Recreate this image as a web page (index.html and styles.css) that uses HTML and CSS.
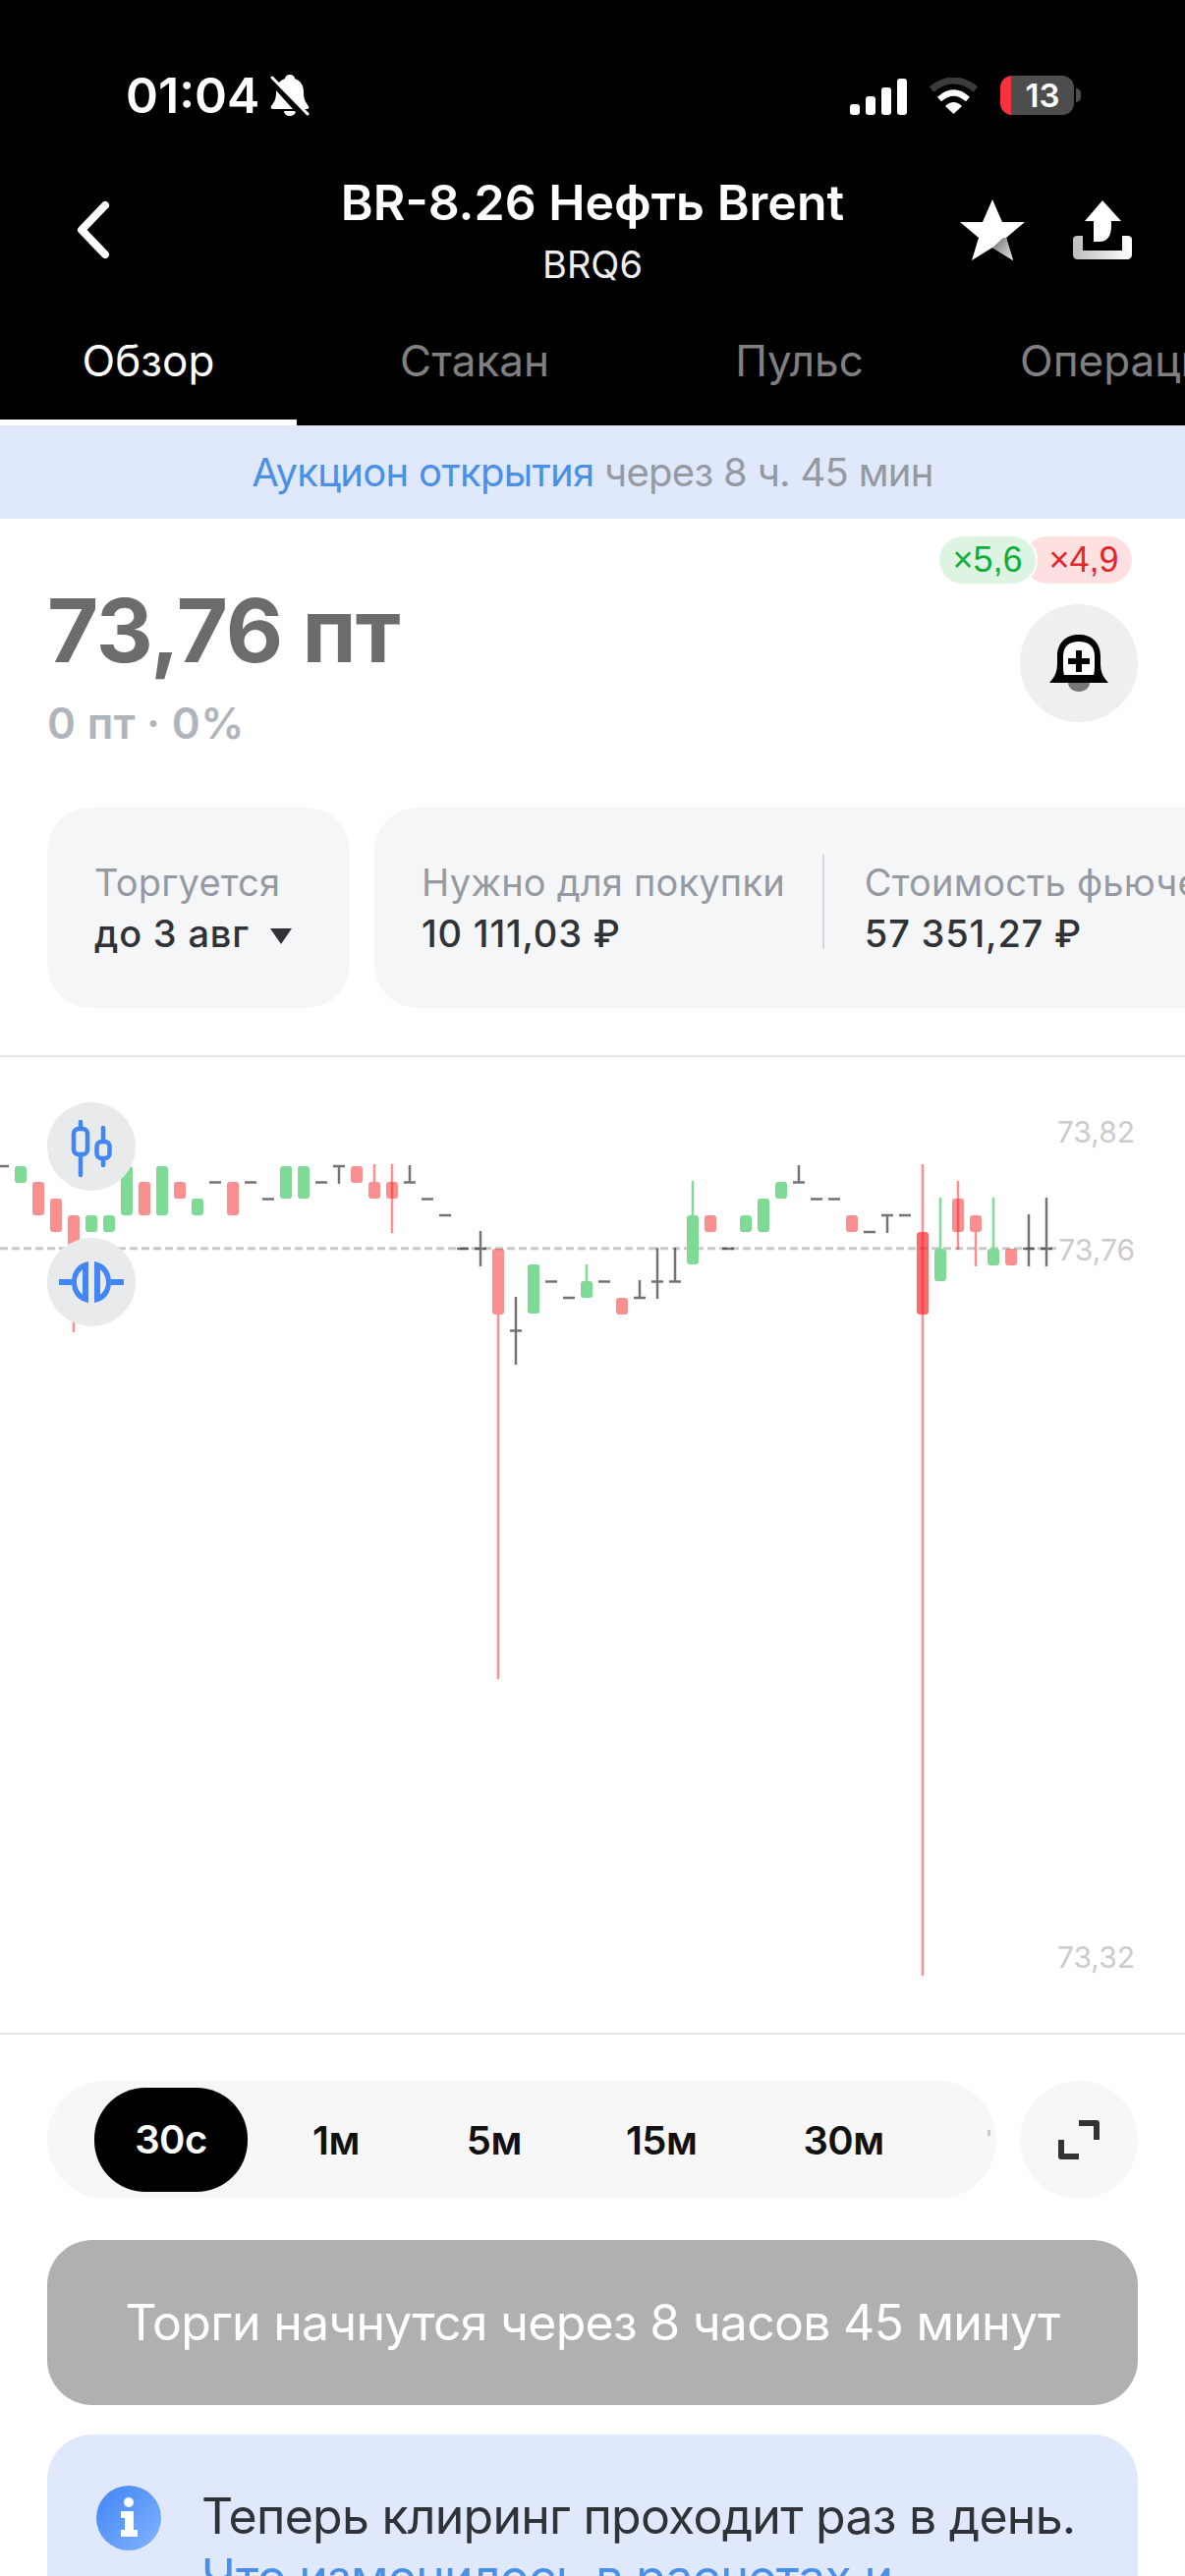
FILE: index.html
```html
<!DOCTYPE html>
<html lang="ru">
<head>
    <meta charset="utf-8">
    <title> BR-8.26 Нефть Brent </title>
    <link rel="stylesheet" href="styles.css">
</head>
<body>
    <!-- Header -->
    <header class="top">
        <div class="status">
            <div class="status-left">
                <span class="clock">01:04</span>
                <svg class="muted" viewBox="0 0 40 42">
                    <path fill="#fff" d="M20 0c3 0 5 2 5 4 6 2 9 7 9 14 0 7 2 10 5 14 1 2 0 3-2 3H3c-2 0-3-1-2-3 3-4 5-7 5-14 0-7 3-12 9-14 0-2 2-4 5-4zM14 37h12c0 3-3 5-6 5s-6-2-6-5z"/>
                    <path stroke="#000" stroke-width="7" d="M-3 1 L36 44"/>
                    <path stroke="#fff" stroke-width="3" stroke-linecap="round" d="M2 3 L38 40"/>
                </svg>
            </div>
            <div class="status-right">
                <div class="signal"><i class="b1"></i><i class="b2"></i><i class="b3"></i><i class="b4"></i></div>
                <svg class="wifi" viewBox="0 0 51 37" fill="none">
                    <path stroke="#3b3b3b" stroke-width="7" d="M3 12 Q25.5 -6 48 12"/>
                    <path stroke="#fff" stroke-width="6" d="M11 22 Q25.5 9 40 22"/>
                    <path fill="#fff" d="M17 29 Q25.5 21 34 29 L25.5 37 Z"/>
                </svg>
                <div class="battery">13</div>
            </div>
        </div>

        <div class="nav">
            <svg class="back" viewBox="0 0 34 60" fill="none">
                <path stroke="#fff" stroke-width="8" stroke-linecap="round" stroke-linejoin="round" d="M29 5 L5 30 L29 55"/>
            </svg>
            <div class="title">
                <div class="name">BR-8.26 Нефть Brent</div>
                <div class="ticker">BRQ6</div>
            </div>
            <div class="actions">
                <svg class="star" viewBox="0 0 66 63">
                    <defs>
                        <linearGradient id="starfade" x1="0" y1="0" x2="1" y2="1">
                            <stop offset="0" stop-color="#6f6f6f"/>
                            <stop offset="1" stop-color="#e8e8e8"/>
                        </linearGradient>
                        <linearGradient id="trayfade" x1="0" y1="0" x2="1" y2="0">
                            <stop offset="0" stop-color="#bdbdbd"/>
                            <stop offset="1" stop-color="#ffffff"/>
                        </linearGradient>
                    </defs>
                    <path fill="#fff" d="M33 0 L43 23 L66 23 L47 39 L54 62 L33 49 L12 62 L19 39 L0 23 L23 23 Z"/>
                    <path fill="url(#starfade)" d="M33 49 L44 39 L47 39 L54 62 Z"/>
                </svg>
                <svg class="share" viewBox="0 0 60 60">
                    <path fill="#fff" d="M30 0 L49 21 H39 V26 C39 36 35 42 27 42 H21 V21 H12 Z"/>
                    <path fill="url(#trayfade)" d="M0 40 C0 37 2 36 5 36 H10 V51 H50 V36 H55 C58 36 60 37 60 40 V55 C60 58 58 60 55 60 H5 C2 60 0 58 0 55 Z"/>
                </svg>
            </div>
        </div>

        <nav class="tabs">
            <a class="tab tab-active">Обзор</a>
            <a class="tab tab-stakan">Стакан</a>
            <a class="tab tab-puls">Пульс</a>
            <a class="tab tab-ops">Операции</a>
        </nav>
    </header>

    <div class="auction"><span class="link">Аукцион открытия</span> через 8 ч. 45 мин</div>

    <!-- Price -->
    <section class="price-block">
        <div class="price-row">
            <div class="price-left">
                <div class="price">73,76 пт</div>
                <div class="change">0 пт · 0%</div>
            </div>
            <div class="price-right">
                <div class="badges">
                    <span class="badge badge-long">×5,6</span>
                    <span class="badge badge-short">×4,9</span>
                </div>
                <div class="round-btn">
                    <svg class="bell" viewBox="0 0 60 58">
                        <path fill="#000" d="M0 49 C6 42 8 38 8 28 V22 C8 8 17 0 30 0 C43 0 52 8 52 22 V28 C52 38 54 42 60 49 Z"/>
                        <path fill="#fff" d="M15 41 C14 38 14 34 14 28 V22 C14 12 20 7 30 7 C40 7 46 12 46 22 V28 C46 34 46 38 45 41 Z"/>
                        <path stroke="#000" stroke-width="6" d="M19 27 H41 M30 16 V38"/>
                        <path fill="#777" d="M19 49 H41 C41 54 36 58 30 58 C24 58 19 54 19 49 Z"/>
                    </svg>
                </div>
            </div>
        </div>

        <div class="cards">
            <div class="card card-expiry">
                <div class="card-label">Торгуется</div>
                <div class="card-value">до 3 авг <i class="caret"></i></div>
            </div>
            <div class="card card-money">
                <div class="card-cell">
                    <div class="card-label">Нужно для покупки</div>
                    <div class="card-value">10 111,03 ₽</div>
                </div>
                <div class="card-line"></div>
                <div class="card-cell">
                    <div class="card-label">Стоимость фьючерса</div>
                    <div class="card-value">57 351,27 ₽</div>
                </div>
            </div>
        </div>
    </section>

    <!-- Chart -->
    <section class="chart">
        <svg class="plot" viewBox="0 1076 1206 993">
            <path class="last" d="M0 1270.7 H1075"/>

            <g class="up">
                <rect x="15" y="1187" width="12" height="17" rx="3"/>
                <rect x="87" y="1237" width="12" height="17" rx="3"/>
                <rect x="105" y="1237" width="12" height="17" rx="3"/>
                <rect x="123" y="1187" width="12" height="50" rx="3"/>
                <rect x="159" y="1187" width="12" height="50" rx="3"/>
                <rect x="195" y="1220" width="12" height="17" rx="3"/>
                <rect x="285" y="1187" width="12" height="33" rx="3"/>
                <rect x="303" y="1187" width="12" height="33" rx="3"/>
                <rect x="537" y="1287" width="12" height="50" rx="3"/>
                <rect x="591" y="1304" width="12" height="17" rx="3"/>
                <rect x="595.75" y="1287" width="2.5" height="17"/>
                <rect x="699" y="1237" width="12" height="50" rx="3"/>
                <rect x="703.75" y="1202" width="2.5" height="35"/>
                <rect x="753" y="1237" width="12" height="17" rx="3"/>
                <rect x="771" y="1220" width="12" height="34" rx="3"/>
                <rect x="789" y="1203" width="12" height="17" rx="3"/>
                <rect x="951" y="1271" width="12" height="33" rx="3"/>
                <rect x="955.75" y="1219" width="2.5" height="52"/>
                <rect x="1005" y="1271" width="12" height="17" rx="3"/>
                <rect x="1009.75" y="1219" width="2.5" height="52"/>
            </g>

            <g class="down">
                <rect x="33" y="1203" width="12" height="34" rx="3"/>
                <rect x="51" y="1220" width="12" height="34" rx="3"/>
                <rect x="69" y="1237" width="12" height="34" rx="3"/>
                <rect x="73.75" y="1271" width="2.5" height="85"/>
                <rect x="141" y="1203" width="12" height="34" rx="3"/>
                <rect x="177" y="1203" width="12" height="17" rx="3"/>
                <rect x="231" y="1203" width="12" height="34" rx="3"/>
                <rect x="357" y="1187" width="12" height="17" rx="3"/>
                <rect x="375" y="1203" width="12" height="17" rx="3"/>
                <rect x="379.75" y="1185" width="2.5" height="18"/>
                <rect x="393" y="1203" width="12" height="17" rx="3"/>
                <rect x="397.75" y="1185" width="2.5" height="70"/>
                <rect x="501" y="1271" width="12" height="67" rx="3"/>
                <rect x="505.75" y="1338" width="2.5" height="371"/>
                <rect x="627" y="1321" width="12" height="17" rx="3"/>
                <rect x="717" y="1237" width="12" height="17" rx="3"/>
                <rect x="861" y="1237" width="12" height="17" rx="3"/>
                <rect class="down-deep" x="933" y="1254" width="12" height="84" rx="3"/>
                <rect x="937.75" y="1185" width="2.5" height="826"/>
                <rect x="969" y="1220" width="12" height="34" rx="3"/>
                <rect x="973.75" y="1202" width="2.5" height="70"/>
                <rect x="987" y="1237" width="12" height="17" rx="3"/>
                <rect x="991.75" y="1254" width="2.5" height="35"/>
                <rect x="1023" y="1271" width="12" height="17" rx="3"/>
            </g>

            <!-- flat candles: open = close -->
            <g class="flat">
                <path d="M-3 1187 H9 M213 1203.5 H225 M249 1203.5 H261 M267 1220.5 H279 M321 1203.5 H333"/>
                <path d="M339 1187 H351 M345 1187 V1205 M411 1203.5 H423 M417 1186 V1203"/>
                <path d="M429 1220.5 H441 M447 1237 H459 M465 1271 H477 M483 1271 H495 M489 1253 V1289"/>
                <path d="M519 1354.5 H531 M525 1320 V1389 M555 1304.5 H567 M573 1321 H585 M609 1304.5 H621"/>
                <path d="M645 1321 H657 M651 1303 V1321 M663 1304.5 H675 M669 1270 V1322 M681 1304.5 H693 M687 1270 V1304"/>
                <path d="M735 1271 H747 M807 1203.5 H819 M813 1186 V1203 M825 1220.5 H837 M843 1220.5 H855"/>
                <path d="M879 1254 H891 M897 1237 H909 M903 1237 V1255 M915 1237 H927"/>
                <path d="M1041 1271 H1053 M1047 1236 V1289 M1059 1271 H1071 M1065 1219 V1289"/>
            </g>

            <text class="axis" x="1155" y="1163" text-anchor="end">73,82</text>
            <text class="axis" x="1155" y="1283" text-anchor="end">73,76</text>
            <text class="axis" x="1155" y="2003" text-anchor="end">73,32</text>
        </svg>

        <div class="chart-btn chart-btn-type">
            <svg viewBox="0 0 90 90" fill="none" stroke="#4285f4" stroke-width="4.5" stroke-linecap="round">
                <path d="M34 20 V27 M34 53 V74"/>
                <rect x="27" y="27" width="14" height="26" rx="5"/>
                <path d="M57 26 V40 M57 57 V64"/>
                <rect x="50.5" y="40" width="13" height="17" rx="5"/>
            </svg>
        </div>
        <div class="chart-btn chart-btn-split">
            <svg viewBox="0 0 90 90" fill="#4285f4" fill-rule="evenodd">
                <path d="M12 42 H25 V48 H12 Z M65 42 H78 V48 H65 Z"/>
                <path d="M42 24 C31 26 25 34 25 45 C25 56 31 64 42 66 Z M36 32 C33 35 30 39 30 45 C30 51 33 55 36 58 Z"/>
                <path d="M48 24 C59 26 65 34 65 45 C65 56 59 64 48 66 Z M54 32 C57 35 60 39 60 45 C60 51 57 55 54 58 Z"/>
            </svg>
        </div>
    </section>

    <!-- Timeframes -->
    <div class="frames">
        <div class="frames-bar">
            <span class="frame frame-active">30с</span>
            <span class="frame f1">1м</span>
            <span class="frame f5">5м</span>
            <span class="frame f15">15м</span>
            <span class="frame f30">30м</span>
            <i class="frame-more"></i>
        </div>
        <div class="round-btn round-btn-light">
            <svg class="expand" viewBox="0 0 42 40" fill="none">
                <path stroke="#333" stroke-width="6" stroke-linejoin="round" d="M21 3 H39 V20"/>
                <path stroke="#333" stroke-width="6" stroke-linejoin="round" d="M3 20 V37 H21"/>
            </svg>
        </div>
    </div>

    <button class="trade-btn" type="button">Торги начнутся через 8 часов 45 минут</button>

    <div class="notice">
        <svg class="info" viewBox="0 0 66 66">
            <defs>
                <linearGradient id="infofill" x1="0" y1="0" x2="1" y2="1">
                    <stop offset="0" stop-color="#3f84f4"/>
                    <stop offset="1" stop-color="#84b4ff"/>
                </linearGradient>
            </defs>
            <circle cx="33" cy="33" r="33" fill="url(#infofill)"/>
            <circle cx="33" cy="17" r="5" fill="#fff"/>
            <path fill="#fff" d="M25 26 H38 V45 H42 V52 H25 V45 H29 V33 H25 Z"/>
        </svg>
        <div class="notice-text">
            <div>Теперь клиринг проходит раз в день.</div>
            <div class="link">Что изменилось в расчетах и</div>
        </div>
    </div>
</body>
</html>
```

FILE: styles.css
```css
* {
    box-sizing: border-box;
}

:root {
    --blue:      #4a8fe8;
    --ink:       #2f3237;
    --label:     #959aa2;
    --card:      #f5f6f8;
    --line:      #e6e6e8;
    --pale-blue: #dfe9fb;
}

html, body {
    margin: 0;
    padding: 0;
}

body {
    width: 1206px;
    height: 2622px;
    overflow: hidden;

    color: var( --ink );
    background-color: #fff;
    font-family: "Inter", "Noto Sans", sans-serif;
}

.link {
    color: var( --blue );
}

/* header */
.top {
    height: 433px;
    padding-top: 77px;

    color: #fff;
    background-color: #000;
}

.status {
    display: flex;
    justify-content: space-between;
    align-items: center;

    height: 40px;
    padding-left: 128px;
    padding-right: 113px;
}

.status-left, .status-right {
    display: flex;
    align-items: center;
}

.clock {
    font-size: 50px;
    font-weight: 600;
}

.muted {
    width: 40px;
    height: 42px;
    margin-left: 11px;
}

.signal {
    display: flex;
    align-items: flex-end;
    gap: 6px;
    height: 37px;
    margin-top: 2px;
}

.signal i {
    width: 10px;
    border-radius: 3px;
    background-color: #fff;
}

.b1 { height: 11px; }
.b2 { height: 19px; }
.b3 { height: 28px; }
.b4 { height: 37px; }

.wifi {
    width: 51px;
    height: 37px;
    margin-left: 22px;
    margin-right: 22px;
}

.battery {
    position: relative;
    width: 75px;
    height: 40px;
    padding-left: 11px;

    border-radius: 12px;
    background: linear-gradient( 90deg, #f5333f 11px, #4d4d4d 11px );

    font-size: 33px;
    font-weight: 600;
    line-height: 40px;
    text-align: center;
}

.battery::after {
    content: "";
    position: absolute;
    right: -7px;
    top: 13px;
    width: 5px;
    height: 14px;
    border-radius: 0 5px 5px 0;
    background-color: #4d4d4d;
}

.nav {
    display: grid;
    grid-template-columns: 1fr auto 1fr;
    align-items: center;

    height: 120px;
    margin-top: 59px;
    padding-left: 78px;
    padding-right: 78px;
}

.back {
    width: 34px;
    height: 60px;
    margin-bottom: 5px;
}

.title {
    align-self: start;
    text-align: center;
}

.name {
    font-size: 50px;
    font-weight: 600;
    line-height: 60px;
}

.ticker {
    margin-top: 11px;
    font-size: 38px;
    line-height: 44px;
    color: #eee;
}

.actions {
    display: flex;
    justify-content: flex-end;
    align-items: center;
    gap: 49px;
    margin-right: -24px;
    margin-bottom: 4px;
}

.star {
    width: 66px;
    height: 63px;
}

.share {
    width: 60px;
    height: 60px;
}

.tabs {
    display: flex;
    height: 91px;
    margin-top: 46px;

    font-size: 44px;
    line-height: 50px;
    color: #808080;
    white-space: nowrap;
}

.tab {
    display: block;
    flex: none;
    text-align: center;
}

.tab-active {
    width: 302px;
    color: #fff;
    border-bottom: 6px solid #fff;
}

.tab-stakan { width: 362px; }
.tab-puls   { width: 299px; }
.tab-ops    { padding-left: 75px; }

.auction {
    height: 95px;

    background-color: var( --pale-blue );
    color: var( --label );

    font-size: 40px;
    letter-spacing: -0.7px;
    line-height: 95px;
    text-align: center;
}

/* price */
.price-block {
    height: 548px;
    border-bottom: 2px solid var( --line );
}

.price-row {
    display: flex;
    justify-content: space-between;
    height: 294px;
    padding-left: 48px;
    padding-right: 48px;
}

.price-left {
    padding-top: 59px;
}

.price {
    font-size: 90px;
    font-weight: 700;
    letter-spacing: -1px;
    line-height: 110px;
    color: #6c6c6c;
}

.change {
    margin-top: 14px;
    font-size: 44px;
    font-weight: 600;
    letter-spacing: 0.3px;
    line-height: 50px;
    color: #b0b4bb;
}

.price-right {
    display: flex;
    flex-direction: column;
    align-items: flex-end;
    padding-top: 18px;
}

.badges {
    display: flex;
    margin-right: 6px;
    margin-bottom: 21px;
}

.badge {
    display: block;
    height: 48px;
    border-radius: 24px;

    font-family: "Liberation Sans", sans-serif;
    font-size: 36px;
    line-height: 48px;
    text-align: center;
}

.badge-long {
    position: relative;
    width: 98px;
    color: #10ae3c;
    background-color: #def4e3;
    box-shadow: 0 0 0 2px #fff;
}

.badge-short {
    width: 110px;
    margin-left: -12px;
    padding-left: 12px;
    color: #e3262e;
    background-color: #ffe0e0;
}

.round-btn {
    display: flex;
    justify-content: center;
    align-items: center;

    width: 120px;
    height: 120px;
    border-radius: 50%;
    background-color: #eeeff1;
}

.round-btn-light {
    flex: none;
    background-color: #f7f7f8;
}

.bell {
    width: 60px;
    height: 58px;
}

.cards {
    display: flex;
    gap: 25px;
    padding-left: 48px;
    white-space: nowrap;
}

.card {
    flex: none;
    height: 204px;
    padding-top: 51px;
    border-radius: 44px;
    background-color: var( --card );
}

.card-expiry {
    width: 308px;
    padding-left: 48px;
}

.card-money {
    display: flex;
    width: 900px;
    padding-left: 48px;
}

.card-cell {
    flex: none;
}

.card-label {
    font-size: 38px;
    letter-spacing: 0.2px;
    line-height: 50px;
    color: var( --label );
}

.card-value {
    margin-top: 2px;
    font-size: 38px;
    font-weight: 500;
    letter-spacing: 0.8px;
    line-height: 50px;
    color: var( --ink );
}

.caret {
    display: inline-block;
    width: 0;
    height: 0;
    margin-left: 10px;
    vertical-align: 3px;
    border-left: 11px solid transparent;
    border-right: 11px solid transparent;
    border-top: 16px solid var( --ink );
}

.card-line {
    flex: none;
    width: 2px;
    height: 96px;
    margin-left: 38px;
    margin-right: 41px;
    margin-top: -3px;
    background-color: #d5d7da;
}

/* chart */
.chart {
    position: relative;
    height: 995px;
    border-bottom: 2px solid var( --line );
}

.plot {
    display: block;
    width: 1206px;
    height: 993px;
}

.last {
    fill: none;
    stroke: #c9c9c9;
    stroke-width: 3;
    stroke-dasharray: 8 4;
}

.up {
    fill: #7fda96;
}

.down {
    fill: #f52022;
    fill-opacity: .5;
}

.down .down-deep {
    fill-opacity: .66;
}

.flat path {
    fill: none;
    stroke: #000;
    stroke-opacity: .55;
    stroke-width: 2.5;
}

.axis {
    font-size: 30px;
    fill: #cbcbcb;
}

.chart-btn {
    position: absolute;
    left: 48px;
    width: 90px;
    height: 90px;
    border-radius: 50%;
    background-color: #e9eaec;
}

.chart-btn svg {
    display: block;
    width: 90px;
    height: 90px;
}

.chart-btn-type  { top: 46px; }
.chart-btn-split { top: 184px; }

/* timeframes */
.frames {
    display: flex;
    justify-content: space-between;
    padding: 47px 48px 0 48px;
}

.frames-bar {
    position: relative;
    display: flex;
    align-items: center;

    width: 966px;
    height: 120px;
    padding-left: 48px;

    border-radius: 60px;
    background-color: #f7f7f8;
}

.frame {
    display: block;
    font-size: 40px;
    font-weight: 600;
    letter-spacing: -0.5px;
    color: #111;
}

.frame-active {
    width: 156px;
    height: 106px;
    border-radius: 52px;
    background-color: #000;
    color: #fff;
    line-height: 106px;
    text-align: center;
}

.f1  { margin-left: 66px; }
.f5  { margin-left: 109px; }
.f15 { margin-left: 106px; }
.f30 { margin-left: 108px; }

.frame-more {
    position: absolute;
    right: 6px;
    top: 50px;
    width: 3px;
    height: 6px;
    background-color: #c9c9c9;
}

.expand {
    width: 42px;
    height: 40px;
}

.trade-btn {
    display: block;
    width: 1110px;
    height: 168px;
    margin: 42px 48px 0 48px;
    padding: 0;

    border: none;
    border-radius: 46px;
    background-color: #aeb0b1;

    color: #fff;
    font-family: inherit;
    font-size: 50px;
    letter-spacing: -0.75px;
}

.notice {
    display: flex;
    width: 1110px;
    height: 300px;
    margin: 30px 48px 0 48px;
    padding: 52px 50px 0 50px;

    border-radius: 46px;
    background-color: var( --pale-blue );
}

.info {
    flex: none;
    width: 66px;
    height: 66px;
}

.notice-text {
    margin-left: 41px;
    font-size: 50px;
    letter-spacing: -0.75px;
    line-height: 62px;
    white-space: nowrap;
}
```
